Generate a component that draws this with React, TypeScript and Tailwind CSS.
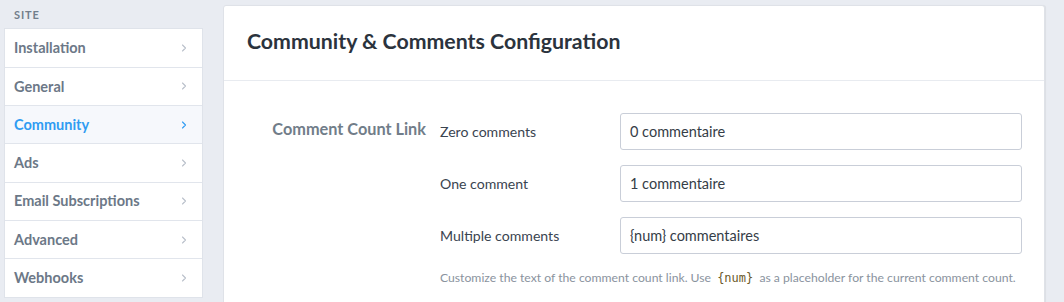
import { ChevronRight } from 'lucide-react';

const navItems = [
  'Installation',
  'General',
  'Community',
  'Ads',
  'Email Subscriptions',
  'Advanced',
  'Webhooks',
];

const fields = [
  { label: 'Zero comments', value: '0 commentaire' },
  { label: 'One comment', value: '1 commentaire' },
  { label: 'Multiple comments', value: '{num} commentaires' },
];

export default function App() {
  return (
    <div
      className="flex h-[302px] overflow-hidden bg-[#e9ecf2] text-[#3a4450]"
      style={{ fontFamily: 'Lato, "Noto Sans", sans-serif' }}
    >
      {/* sidebar */}
      <div className="w-[203px] shrink-0 pl-1 pt-[7px]">
        <div className="px-[10px] pb-[4px] text-[11px] font-bold uppercase tracking-[0.08em] text-[#727e8b]">
          Site
        </div>
        <div className="border border-[#dfe3ea] bg-white">
          {navItems.map((item, i) => {
            const active = item === 'Community';
            return (
              <div
                key={item}
                className={`flex h-[38.3px] items-center justify-between pl-[9px] pr-[12px] ${
                  i > 0 ? 'border-t border-[#e1e5ec]' : ''
                } ${active ? 'bg-[#f6f8fc] text-[#2f9cf2]' : 'text-[#6c7887]'}`}
              >
                <span className="text-[14.5px] font-bold">{item}</span>
                <ChevronRight
                  size={12}
                  strokeWidth={2.2}
                  className={active ? 'text-[#2f9cf2]' : 'text-[#b9c0ca]'}
                />
              </div>
            );
          })}
        </div>
      </div>

      {/* main card */}
      <div className="ml-[20px] mt-[5px] w-[822px] shrink-0 self-start rounded-t-[3px] border border-[#dfe2e8] bg-white shadow-[1px_0_1px_rgba(0,0,0,0.06)]">
        <div className="flex h-[75px] items-center border-b border-[#e8ebf0] px-[23px] pb-[3px]">
          <h1 className="text-[21.3px] font-bold text-[#2b333d]">
            Community &amp; Comments Configuration
          </h1>
        </div>
        <div className="flex pt-[32px] pb-[20px]">
          <div className="w-[202px] shrink-0 pt-[4px] text-right text-[16.3px] font-bold text-[#717d89]">
            Comment Count Link
          </div>
          <div className="ml-[14px] flex-1 pr-[22px]">
            <div className="flex flex-col gap-[15px]">
              {fields.map((f) => (
                <div key={f.label} className="flex items-center">
                  <div className="w-[180px] shrink-0 text-[14.1px] text-[#3a4450]">
                    {f.label}
                  </div>
                  <div className="flex h-[37px] flex-1 items-center rounded-[3px] border border-[#c9ced8] px-[9px] text-[14.5px] text-[#353d47]">
                    {f.value}
                  </div>
                </div>
              ))}
            </div>
            <p className="mt-[15px] text-[12.2px] text-[#8a939e]">
              Customize the text of the comment count link. Use{' '}
              <code
                className="px-[3px] text-[12px] text-[#6b5a2a]"
                style={{ fontFamily: '"DejaVu Sans Mono", monospace' }}
              >
                {'{num}'}
              </code>{' '}
              as a placeholder for the current comment count.
            </p>
          </div>
        </div>
      </div>
    </div>
  );
}
